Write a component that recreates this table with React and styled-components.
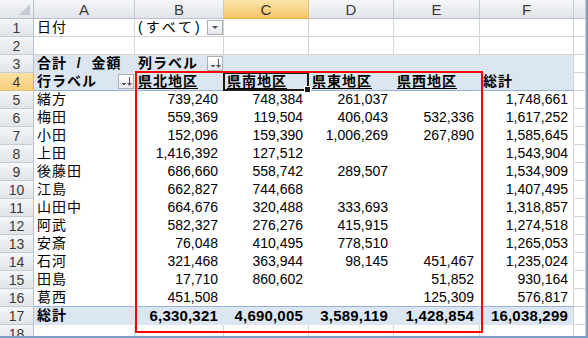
import React from "react"
import styled, { createGlobalStyle, css } from "styled-components"

const GlobalStyle = createGlobalStyle`
  html, body {
    margin: 0;
    padding: 0;
    background: #ffffff;
    overflow: hidden;
  }
`

const FONT = `"Liberation Sans", "Noto Sans CJK JP", sans-serif`

const Sheet = styled.div`
  position: relative;
  width: 588px;
  height: 338px;
  box-sizing: border-box;
  border-right: 2px solid #7f9cc4;
  border-bottom: 2px solid #7f9cc4;
  overflow: hidden;
  font-family: ${FONT};
  color: #000;
`

const Grid = styled.div`
  display: grid;
  grid-template-columns: 34px 101px 89px 85px 85px 86px 94px 1fr;
  grid-template-rows: 19px repeat(18, 18px);
`

const headBg = css`
  background: linear-gradient(to bottom, #f5f6f8 0%, #e9ecf0 55%, #e1e5ea 100%);
`

const Corner = styled.div`
  position: relative;
  box-sizing: border-box;
  ${headBg};
  border-right: 1px solid #b9c2cc;
  border-bottom: 1px solid #b9c2cc;

  &::after {
    content: "";
    position: absolute;
    right: 3px;
    bottom: 3px;
    width: 0;
    height: 0;
    border-left: 11px solid transparent;
    border-bottom: 11px solid #c3cad2;
  }
`

const ColHead = styled.div`
  box-sizing: border-box;
  display: flex;
  align-items: center;
  justify-content: center;
  font-size: 15px;
  color: #3b3b3b;
  border-right: 1px solid #c5ccd4;
  border-bottom: 1px solid #b9c2cc;
  ${headBg};
  ${(p) =>
    p.$active &&
    css`
      background: linear-gradient(to bottom, #fbe3a8 0%, #f7d486 55%, #f3c663 100%);
      border-bottom: 1px solid #e9b446;
      border-right: 1px solid #e1be7e;
      color: #333;
    `}
`

const RowHead = styled.div`
  box-sizing: border-box;
  display: flex;
  align-items: center;
  justify-content: center;
  font-size: 14px;
  color: #3b3b3b;
  border-right: 1px solid #b9c2cc;
  border-bottom: 1px solid #c5ccd4;
  ${headBg};
  ${(p) =>
    p.$active &&
    css`
      background: linear-gradient(to bottom, #fbe1a4 0%, #f6d07c 100%);
      border-right: 1px solid #e9b446;
      border-bottom: 1px solid #e1be7e;
    `}
`

const Cell = styled.div`
  position: relative;
  box-sizing: border-box;
  display: flex;
  align-items: center;
  justify-content: ${(p) => (p.$num ? "flex-end" : "flex-start")};
  padding: ${(p) => (p.$num ? "0 5px 0 0" : "0 0 0 3px")};
  font-size: ${(p) => (p.$bold && p.$num ? "15px" : "14px")};
  font-weight: ${(p) => (p.$bold ? 700 : 400)};
  letter-spacing: ${(p) => (p.$num ? (p.$bold ? "0.2px" : "0") : "1px")};
  text-decoration: ${(p) => (p.$under ? "underline" : "none")};
  text-underline-offset: 2px;
  white-space: pre;
  line-height: 17px;
  background: ${(p) => (p.$band ? "#dce6f1" : "#ffffff")};
  border-right: 1px solid ${(p) => (p.$band || p.$pivot ? "transparent" : "#d4d4d4")};
  border-bottom: 1px solid
    ${(p) => (p.$rule ? "#95b3d7" : p.$band || p.$pivot ? "transparent" : "#d4d4d4")};
  ${(p) =>
    p.$edge &&
    css`
      border-right-color: #d4d4d4;
    `}
  ${(p) =>
    p.$selected &&
    css`
      &::after {
        content: "";
        position: absolute;
        top: -1px;
        left: -1px;
        right: -1px;
        bottom: -1px;
        border: 2px solid #1d1a14;
        pointer-events: none;
      }
      &::before {
        content: "";
        position: absolute;
        right: -3px;
        bottom: -3px;
        width: 5px;
        height: 5px;
        background: #1d1a14;
        border: 1px solid #ffffff;
        z-index: 2;
      }
    `}
`

const Spaced = styled.span`
  letter-spacing: 3px;
`

const FilterButton = styled.span`
  margin-left: auto;
  margin-right: 0;
  width: 16px;
  height: 15px;
  box-sizing: border-box;
  border: 1px solid #a9b0b8;
  background: linear-gradient(to bottom, #ffffff, #e5e8ec);
  display: flex;
  align-items: center;
  justify-content: center;
  flex-shrink: 0;
`

const RedFrame = styled.div`
  position: absolute;
  left: 135px;
  top: 71px;
  width: 348px;
  height: 262px;
  box-sizing: border-box;
  border: 2px solid #ff0000;
  pointer-events: none;
`

function DropIcon() {
  return (
    <svg width="12" height="11" viewBox="0 0 12 11">
      <polygon points="3,4 9,4 6,7" fill="#555" />
    </svg>
  )
}

function FilterIcon() {
  return (
    <svg width="14" height="13" viewBox="0 0 14 13">
      <rect x="3" y="8" width="4" height="1" fill="#555" />
      <rect x="4" y="9" width="2" height="1" fill="#555" />
      <rect x="10" y="2" width="1" height="7" fill="#555" />
      <polygon points="8,8 13,8 10.5,11" fill="#555" />
    </svg>
  )
}

const columns = ["A", "B", "C", "D", "E", "F", ""]

const rows = [
  ["緒方", "739,240", "748,384", "261,037", "", "1,748,661"],
  ["梅田", "559,369", "119,504", "406,043", "532,336", "1,617,252"],
  ["小田", "152,096", "159,390", "1,006,269", "267,890", "1,585,645"],
  ["上田", "1,416,392", "127,512", "", "", "1,543,904"],
  ["後藤田", "686,660", "558,742", "289,507", "", "1,534,909"],
  ["江島", "662,827", "744,668", "", "", "1,407,495"],
  ["山田中", "664,676", "320,488", "333,693", "", "1,318,857"],
  ["阿武", "582,327", "276,276", "415,915", "", "1,274,518"],
  ["安斎", "76,048", "410,495", "778,510", "", "1,265,053"],
  ["石河", "321,468", "363,944", "98,145", "451,467", "1,235,024"],
  ["田島", "17,710", "860,602", "", "51,852", "930,164"],
  ["葛西", "451,508", "", "", "125,309", "576,817"],
]

const totals = ["総計", "6,330,321", "4,690,005", "3,589,119", "1,428,854", "16,038,299"]

const regions = ["県北地区", "県南地区", "県東地区", "県西地区"]

function PlainRow({ n, children }) {
  return (
    <>
      <RowHead>{n}</RowHead>
      {children}
    </>
  )
}

export default function App() {
  return (
    <>
      <GlobalStyle />
      <Sheet>
        <Grid>
          <Corner />
          {columns.map((c, i) => (
            <ColHead key={i} $active={c === "C"}>
              {c}
            </ColHead>
          ))}

          <PlainRow n={1}>
            <Cell>日付</Cell>
            <Cell>
              <Spaced>(すべて)</Spaced>
              <FilterButton>
                <DropIcon />
              </FilterButton>
            </Cell>
            <Cell />
            <Cell />
            <Cell />
            <Cell />
            <Cell />
          </PlainRow>

          <PlainRow n={2}>
            {columns.map((_, i) => (
              <Cell key={i} />
            ))}
          </PlainRow>

          <PlainRow n={3}>
            <Cell $band $bold>
              合計  /  金額
            </Cell>
            <Cell $band $bold>
              列ラベル
              <FilterButton>
                <FilterIcon />
              </FilterButton>
            </Cell>
            <Cell $band />
            <Cell $band />
            <Cell $band />
            <Cell $band $edge />
            <Cell />
          </PlainRow>

          <RowHead $active>4</RowHead>
          <Cell $band $bold $rule>
            行ラベル
            <FilterButton>
              <FilterIcon />
            </FilterButton>
          </Cell>
          {regions.map((r, i) => (
            <Cell key={r} $band $bold $rule $under $selected={i === 1}>
              {r}
            </Cell>
          ))}
          <Cell $band $bold $rule $edge>
            総計
          </Cell>
          <Cell />

          {rows.map((row, ri) => (
            <PlainRow key={ri} n={ri + 5}>
              {row.map((v, ci) => (
                <Cell
                  key={ci}
                  $pivot
                  $num={ci > 0}
                  $rule={ri === rows.length - 1}
                  $edge={ci === 5}
                >
                  {v}
                </Cell>
              ))}
              <Cell />
            </PlainRow>
          ))}

          <PlainRow n={17}>
            {totals.map((v, ci) => (
              <Cell key={ci} $band $bold $num={ci > 0} $edge={ci === 5}>
                {v}
              </Cell>
            ))}
            <Cell />
          </PlainRow>

          <PlainRow n={18}>
            {columns.map((_, i) => (
              <Cell key={i} />
            ))}
          </PlainRow>
        </Grid>
        <RedFrame />
      </Sheet>
    </>
  )
}
